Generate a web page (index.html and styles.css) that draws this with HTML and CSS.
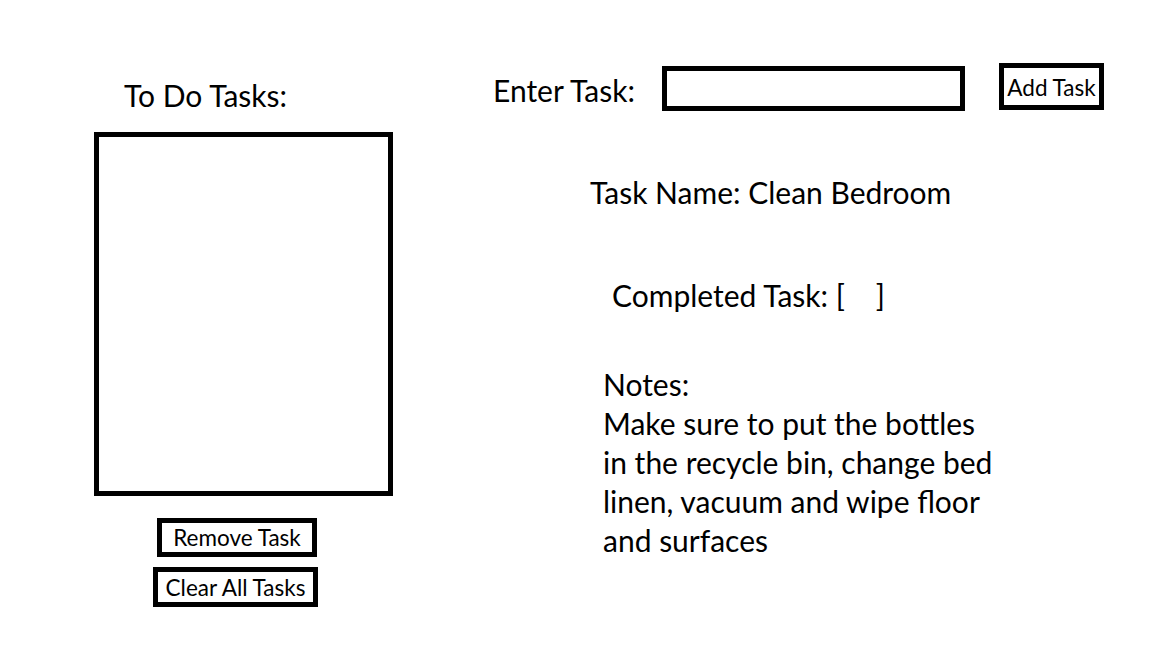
FILE: index.html
```html
<!DOCTYPE html>
<html>
<head>
<meta charset="utf-8">
<title>To Do</title>
<link rel="stylesheet" href="styles.css">
</head>
<body>
<div class="page">
  <div class="left">
    <div class="heading">To Do Tasks:</div>
    <div class="task-list"></div>
    <div class="btn btn-remove">Remove Task</div>
    <div class="btn btn-clear">Clear All Tasks</div>
  </div>
  <div class="right">
    <div class="entry-row">
      <div class="entry-label">Enter Task:</div>
      <div class="entry-input"></div>
      <div class="btn btn-add">Add Task</div>
    </div>
    <div class="detail task-name">Task Name: Clean Bedroom</div>
    <div class="detail completed">Completed Task: [&nbsp;&nbsp;&nbsp;&nbsp;]</div>
    <div class="detail notes">Notes:<br>Make sure to put the bottles<br>in the recycle bin, change bed<br>linen, vacuum and wipe floor<br>and surfaces</div>
  </div>
</div>
</body>
</html>
```

FILE: styles.css
```css
html, body {
  margin: 0;
  padding: 0;
  background: #ffffff;
}
body {
  width: 1152px;
  height: 648px;
  overflow: hidden;
  font-family: "Lato", "Open Sans", sans-serif;
  color: #000;
}
.page {
  display: flex;
  align-items: flex-start;
}
.left {
  display: flex;
  flex-direction: column;
  align-items: flex-start;
  padding-left: 94px;
  padding-top: 76px;
  width: 299px;
}
.heading {
  font-size: 30px;
  line-height: 39px;
  margin-left: 30px;
  white-space: nowrap;
}
.task-list {
  box-sizing: border-box;
  width: 299px;
  height: 364px;
  border: 5px solid #000;
  margin-top: 17px;
}
.btn {
  box-sizing: border-box;
  border: 5px solid #000;
  display: flex;
  align-items: center;
  justify-content: center;
  font-size: 22.5px;
  white-space: nowrap;
}
.btn-remove {
  width: 160px;
  height: 39px;
  margin-top: 22px;
  margin-left: 63px;
}
.btn-clear {
  width: 165px;
  height: 40px;
  margin-top: 10px;
  margin-left: 59px;
}
.btn-add {
  width: 105px;
  height: 47px;
  margin-left: 34px;
  padding-top: 1px;
}
.right {
  display: flex;
  flex-direction: column;
  align-items: flex-start;
  margin-left: 100px;
  padding-top: 63px;
}
.entry-row {
  display: flex;
  align-items: flex-start;
}
.entry-label {
  width: 169px;
  font-size: 30px;
  line-height: 39px;
  margin-top: 8px;
  margin-bottom: -2px;
  white-space: nowrap;
}
.entry-input {
  box-sizing: border-box;
  width: 303px;
  height: 45px;
  border: 5px solid #000;
  margin-top: 3px;
}
.detail {
  font-size: 30px;
  line-height: 39px;
  white-space: nowrap;
}
.task-name {
  margin-left: 97px;
  margin-top: 62px;
}
.completed {
  margin-left: 119px;
  margin-top: 64px;
}
.notes {
  margin-left: 110px;
  margin-top: 50px;
}
```
